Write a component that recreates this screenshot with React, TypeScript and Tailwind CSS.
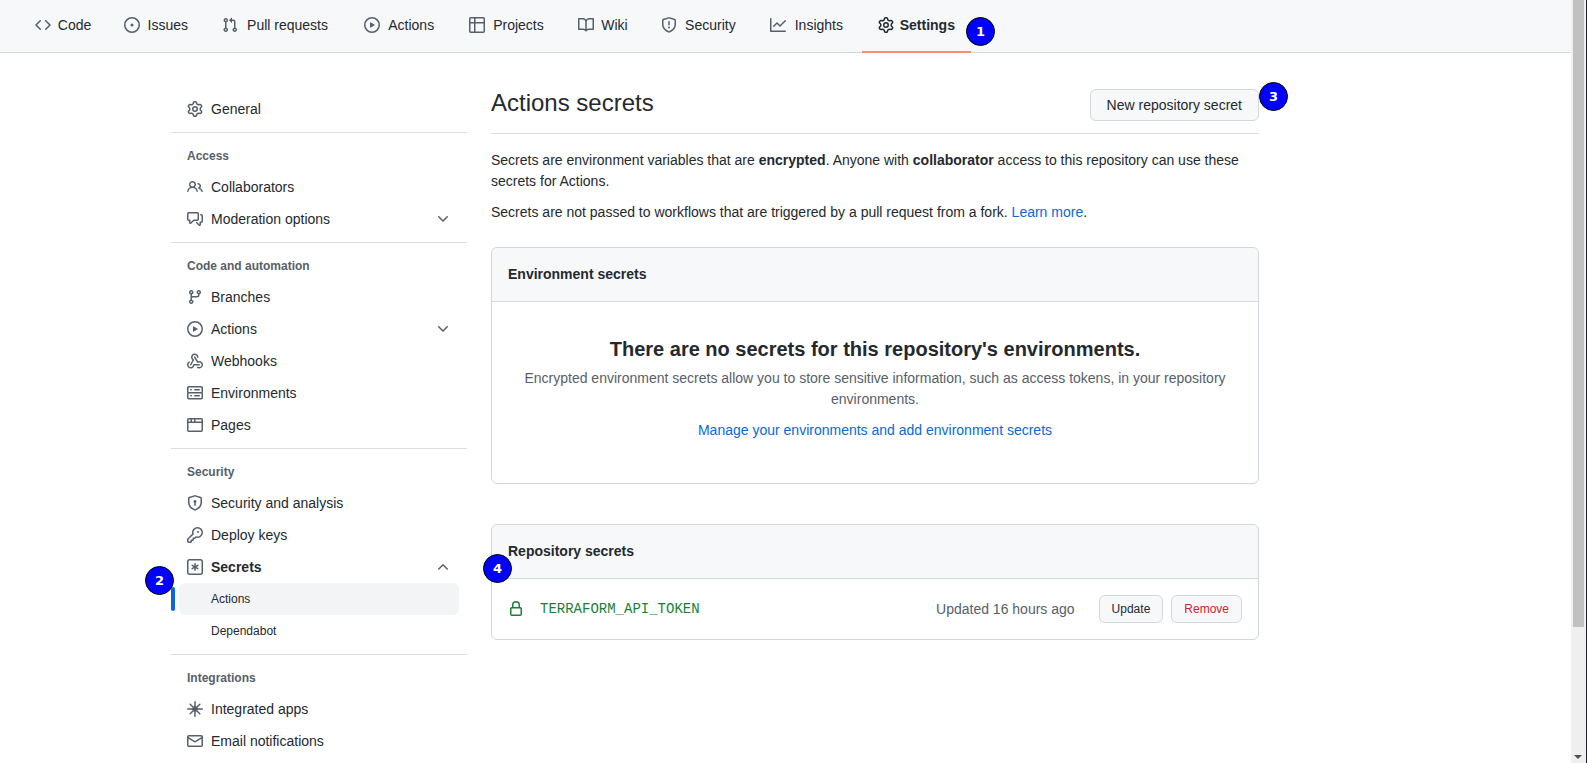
import type { ReactNode } from "react";

/* --- octicons, 16px --- */
const paths = {
  code: "m11.28 3.22 4.25 4.25a.75.75 0 0 1 0 1.06l-4.25 4.25a.749.749 0 0 1-1.275-.326.749.749 0 0 1 .215-.734L13.94 8l-3.72-3.72a.749.749 0 0 1 .326-1.275.749.749 0 0 1 .734.215Zm-6.56 0a.751.751 0 0 1 1.042.018.751.751 0 0 1 .018 1.042L2.06 8l3.72 3.72a.749.749 0 0 1-.326 1.275.749.749 0 0 1-.734-.215L.47 8.53a.75.75 0 0 1 0-1.06Z",
  issue: "M8 9.5a1.5 1.5 0 1 0 0-3 1.5 1.5 0 0 0 0 3Z M8 0a8 8 0 1 1 0 16A8 8 0 0 1 8 0ZM1.5 8a6.5 6.5 0 1 0 13 0 6.5 6.5 0 0 0-13 0Z",
  pull: "M1.5 3.25a2.25 2.25 0 1 1 3 2.122v5.256a2.251 2.251 0 1 1-1.5 0V5.372A2.25 2.25 0 0 1 1.5 3.25Zm5.677-.177L9.573.677A.25.25 0 0 1 10 .854V2.5h1A2.5 2.5 0 0 1 13.5 5v5.628a2.251 2.251 0 1 1-1.5 0V5a1 1 0 0 0-1-1h-1v1.646a.25.25 0 0 1-.427.177L7.177 3.427a.25.25 0 0 1 0-.354ZM3.75 2.5a.75.75 0 1 0 0 1.5.75.75 0 0 0 0-1.5Zm0 9.5a.75.75 0 1 0 0 1.5.75.75 0 0 0 0-1.5Zm8.25.75a.75.75 0 1 0 1.5 0 .75.75 0 0 0-1.5 0Z",
  play: "M8 0a8 8 0 1 1 0 16A8 8 0 0 1 8 0ZM1.5 8a6.5 6.5 0 1 0 13 0 6.5 6.5 0 0 0-13 0Zm4.879-2.773 4.264 2.559a.25.25 0 0 1 0 .428l-4.264 2.559A.25.25 0 0 1 6 10.559V5.442a.25.25 0 0 1 .379-.215Z",
  table: "M0 1.75C0 .784.784 0 1.75 0h12.5C15.216 0 16 .784 16 1.75v12.5A1.75 1.75 0 0 1 14.25 16H1.75A1.75 1.75 0 0 1 0 14.25ZM6.5 6.5v8h7.75a.25.25 0 0 0 .25-.25V6.5Zm8-1.5V1.75a.25.25 0 0 0-.25-.25H6.5V5Zm-13 1.5v7.75c0 .138.112.25.25.25H5v-8ZM5 5V1.5H1.75a.25.25 0 0 0-.25.25V5Z",
  book: "M0 1.75A.75.75 0 0 1 .75 1h4.253c1.227 0 2.317.59 3 1.501A3.743 3.743 0 0 1 11.006 1h4.245a.75.75 0 0 1 .75.75v10.5a.75.75 0 0 1-.75.75h-4.507a2.25 2.25 0 0 0-1.591.659l-.622.621a.75.75 0 0 1-1.06 0l-.622-.621A2.25 2.25 0 0 0 5.258 13H.75a.75.75 0 0 1-.75-.75Zm7.251 10.324.004-5.073-.002-2.253A2.25 2.25 0 0 0 5.003 2.5H1.5v9h3.757a3.75 3.75 0 0 1 1.994.574ZM8.755 4.75l-.004 7.322a3.752 3.752 0 0 1 1.992-.572H14.5v-9h-3.495a2.25 2.25 0 0 0-2.25 2.25Z",
  shield: "M7.467.133a1.748 1.748 0 0 1 1.066 0l5.25 1.68A1.75 1.75 0 0 1 15 3.48V7c0 1.566-.32 3.182-1.303 4.682-.983 1.498-2.585 2.813-5.032 3.855a1.697 1.697 0 0 1-1.33 0c-2.447-1.042-4.049-2.357-5.032-3.855C1.32 10.182 1 8.566 1 7V3.48a1.75 1.75 0 0 1 1.217-1.667Zm.61 1.429a.25.25 0 0 0-.153 0l-5.25 1.68a.25.25 0 0 0-.174.238V7c0 1.358.275 2.666 1.057 3.86.784 1.194 2.121 2.34 4.366 3.297a.196.196 0 0 0 .154 0c2.245-.956 3.582-2.104 4.366-3.298C13.225 9.666 13.5 8.36 13.5 7V3.48a.251.251 0 0 0-.174-.237l-5.25-1.68ZM8.75 4.75v3a.75.75 0 0 1-1.5 0v-3a.75.75 0 0 1 1.5 0ZM9 10.5a1 1 0 1 1-2 0 1 1 0 0 1 2 0Z",
  graph: "M1.5 1.75V13.5h13.75a.75.75 0 0 1 0 1.5H.75a.75.75 0 0 1-.75-.75V1.75a.75.75 0 0 1 1.5 0Zm14.28 2.53-5.25 5.25a.75.75 0 0 1-1.06 0L7 7.06 4.28 9.78a.751.751 0 0 1-1.042-.018.751.751 0 0 1-.018-1.042l3.25-3.25a.75.75 0 0 1 1.06 0L10 7.94l4.72-4.72a.751.751 0 0 1 1.042.018.751.751 0 0 1 .018 1.042Z",
  gear: "M8 0a8.2 8.2 0 0 1 .701.031C9.444.095 9.99.645 10.16 1.29l.288 1.107c.018.066.079.158.212.224.231.114.454.243.668.386.123.082.233.09.299.071l1.103-.303c.644-.176 1.392.021 1.82.63.27.385.506.792.704 1.218.315.675.111 1.422-.364 1.891l-.814.806c-.049.048-.098.147-.088.294.016.257.016.515 0 .772-.01.147.038.246.088.294l.814.806c.475.469.679 1.216.364 1.891a7.977 7.977 0 0 1-.704 1.217c-.428.61-1.176.807-1.82.63l-1.102-.302c-.067-.019-.177-.011-.3.071a5.909 5.909 0 0 1-.668.386c-.133.066-.194.158-.211.224l-.29 1.106c-.168.646-.715 1.196-1.458 1.26a8.006 8.006 0 0 1-1.402 0c-.743-.064-1.289-.614-1.458-1.26l-.289-1.106c-.018-.066-.079-.158-.212-.224a5.738 5.738 0 0 1-.668-.386c-.123-.082-.233-.09-.299-.071l-1.103.303c-.644.176-1.392-.021-1.82-.63a8.12 8.12 0 0 1-.704-1.218c-.315-.675-.111-1.422.363-1.891l.815-.806c.05-.048.098-.147.088-.294a6.214 6.214 0 0 1 0-.772c.01-.147-.038-.246-.088-.294l-.815-.806C.635 6.045.431 5.298.746 4.623a7.92 7.92 0 0 1 .704-1.217c.428-.61 1.176-.807 1.82-.63l1.102.302c.067.019.177.011.3-.071.214-.143.437-.272.668-.386.133-.066.194-.158.211-.224l.29-1.106C6.009.645 6.556.095 7.299.03 7.53.01 7.764 0 8 0Zm-.571 1.525c-.036.003-.108.036-.137.146l-.289 1.105c-.147.561-.549.967-.998 1.189-.173.086-.34.183-.5.29-.417.278-.97.423-1.529.27l-1.103-.303c-.109-.03-.175.016-.195.045-.22.312-.412.644-.573.99-.014.031-.021.11.059.19l.815.806c.411.406.562.957.53 1.456a4.709 4.709 0 0 0 0 .582c.032.499-.119 1.05-.53 1.456l-.815.806c-.081.08-.073.159-.059.19.162.346.353.677.573.989.02.03.085.076.195.046l1.102-.303c.56-.153 1.113-.008 1.53.27.161.107.328.204.501.29.447.222.85.629.997 1.189l.289 1.105c.029.109.101.143.137.146a6.6 6.6 0 0 0 1.142 0c.036-.003.108-.036.137-.146l.289-1.105c.147-.561.549-.967.998-1.189.173-.086.34-.183.5-.29.417-.278.97-.423 1.529-.27l1.103.303c.109.029.175-.016.195-.045.22-.313.411-.644.573-.99.014-.031.021-.11-.059-.19l-.815-.806c-.411-.406-.562-.957-.53-1.456a4.709 4.709 0 0 0 0-.582c-.032-.499.119-1.05.53-1.456l.815-.806c.081-.08.073-.159.059-.19a6.464 6.464 0 0 0-.573-.989c-.02-.03-.085-.076-.195-.046l-1.102.303c-.56.153-1.113.008-1.53-.27a4.44 4.44 0 0 0-.501-.29c-.447-.222-.85-.629-.997-1.189l-.289-1.105c-.029-.11-.101-.143-.137-.146a6.6 6.6 0 0 0-1.142 0ZM11 8a3 3 0 1 1-6 0 3 3 0 0 1 6 0ZM9.5 8a1.5 1.5 0 1 0-3.001.001A1.5 1.5 0 0 0 9.5 8Z",
  people: "M2 5.5a3.5 3.5 0 1 1 5.898 2.549 5.508 5.508 0 0 1 3.034 4.084.75.75 0 1 1-1.482.235 4 4 0 0 0-7.9 0 .75.75 0 0 1-1.482-.236A5.507 5.507 0 0 1 3.102 8.05 3.493 3.493 0 0 1 2 5.5ZM11 4a3.001 3.001 0 0 1 2.22 5.018 5.01 5.01 0 0 1 2.56 3.012.749.749 0 0 1-.885.954.752.752 0 0 1-.549-.514 3.507 3.507 0 0 0-2.522-2.372.75.75 0 0 1-.574-.73v-.352a.75.75 0 0 1 .416-.672A1.5 1.5 0 0 0 11 5.5.75.75 0 0 1 11 4Zm-5.5-.5a2 2 0 1 0-.001 3.999A2 2 0 0 0 5.5 3.5Z",
  comments: "M1.75 1h8.5c.966 0 1.75.784 1.75 1.75v5.5A1.75 1.75 0 0 1 10.25 10H7.061l-2.574 2.573A1.458 1.458 0 0 1 2 11.543V10h-.25A1.75 1.75 0 0 1 0 8.25v-5.5C0 1.784.784 1 1.75 1ZM1.5 2.75v5.5c0 .138.112.25.25.25h1a.75.75 0 0 1 .75.75v2.19l2.72-2.72a.749.749 0 0 1 .53-.22h3.5a.25.25 0 0 0 .25-.25v-5.5a.25.25 0 0 0-.25-.25h-8.5a.25.25 0 0 0-.25.25Zm13 2a.25.25 0 0 0-.25-.25h-.5a.75.75 0 0 1 0-1.5h.5c.966 0 1.75.784 1.75 1.75v5.5A1.75 1.75 0 0 1 14.25 12H14v1.543a1.458 1.458 0 0 1-2.487 1.03L9.22 12.28a.749.749 0 0 1 .326-1.275.749.749 0 0 1 .734.215l2.22 2.22v-2.19a.75.75 0 0 1 .75-.75h1a.25.25 0 0 0 .25-.25Z",
  branch: "M9.5 3.25a2.25 2.25 0 1 1 3 2.122V6A2.5 2.5 0 0 1 10 8.5H6a1 1 0 0 0-1 1v1.128a2.251 2.251 0 1 1-1.5 0V5.372a2.25 2.25 0 1 1 1.5 0v1.836A2.493 2.493 0 0 1 6 7h4a1 1 0 0 0 1-1v-.628A2.25 2.25 0 0 1 9.5 3.25Zm-6 0a.75.75 0 1 0 1.5 0 .75.75 0 0 0-1.5 0Zm8.25-.75a.75.75 0 1 0 0 1.5.75.75 0 0 0 0-1.5ZM4.25 12a.75.75 0 1 0 0 1.5.75.75 0 0 0 0-1.5Z",
  webhook: "M5.5 4.25a2.25 2.25 0 0 1 4.5 0 .75.75 0 0 0 1.5 0 3.75 3.75 0 1 0-6.14 2.889l-2.272 4.258a.75.75 0 0 0 1.324.706L7 7.25a.75.75 0 0 0-.309-1.015A2.25 2.25 0 0 1 5.5 4.25Z M7.364 3.607a.75.75 0 0 1 1.03.257l2.608 4.349a3.75 3.75 0 1 1-.628 6.785.75.75 0 0 1 .752-1.299 2.25 2.25 0 1 0-.033-3.88.75.75 0 0 1-1.03-.256L7.107 4.636a.75.75 0 0 1 .257-1.03Z M2.9 8.776A.75.75 0 0 1 2.625 9.8 2.25 2.25 0 1 0 6 11.75a.75.75 0 0 1 .75-.751h5.5a.75.75 0 0 1 0 1.5H7.425a3.751 3.751 0 1 1-5.55-3.998.75.75 0 0 1 1.024.274Z",
  server: "M1.75 1h12.5c.966 0 1.75.784 1.75 1.75v4c0 .372-.116.717-.314 1 .198.283.314.628.314 1v4a1.75 1.75 0 0 1-1.75 1.75H1.75A1.75 1.75 0 0 1 0 12.75v-4c0-.358.109-.707.314-1a1.739 1.739 0 0 1-.314-1v-4C0 1.784.784 1 1.75 1ZM1.5 2.75v4c0 .138.112.25.25.25h12.5a.25.25 0 0 0 .25-.25v-4a.25.25 0 0 0-.25-.25H1.75a.25.25 0 0 0-.25.25Zm.25 5.75a.25.25 0 0 0-.25.25v4c0 .138.112.25.25.25h12.5a.25.25 0 0 0 .25-.25v-4a.25.25 0 0 0-.25-.25ZM7 4.75A.75.75 0 0 1 7.75 4h4.5a.75.75 0 0 1 0 1.5h-4.5A.75.75 0 0 1 7 4.75ZM7.75 10h4.5a.75.75 0 0 1 0 1.5h-4.5a.75.75 0 0 1 0-1.5ZM3 4.75A.75.75 0 0 1 3.75 4h.5a.75.75 0 0 1 0 1.5h-.5A.75.75 0 0 1 3 4.75ZM3.75 10h.5a.75.75 0 0 1 0 1.5h-.5a.75.75 0 0 1 0-1.5Z",
  browser: "M0 2.75C0 1.784.784 1 1.75 1h12.5c.966 0 1.75.784 1.75 1.75v10.5A1.75 1.75 0 0 1 14.25 15H1.75A1.75 1.75 0 0 1 0 13.25ZM14.5 6h-13v7.25c0 .138.112.25.25.25h12.5a.25.25 0 0 0 .25-.25Zm-6-3.5v2h6V2.75a.25.25 0 0 0-.25-.25ZM5 2.5v2h2v-2Zm-3.25 0a.25.25 0 0 0-.25.25V4.5h2v-2Z",
  shieldLock: "m8.533.133 5.25 1.68A1.75 1.75 0 0 1 15 3.48V7c0 1.566-.32 3.182-1.303 4.682-.983 1.498-2.585 2.813-5.032 3.855a1.697 1.697 0 0 1-1.33 0c-2.447-1.042-4.049-2.357-5.032-3.855C1.32 10.182 1 8.566 1 7V3.48a1.75 1.75 0 0 1 1.217-1.667l5.25-1.68a1.748 1.748 0 0 1 1.066 0Zm-.61 1.429.001.001-5.25 1.68a.251.251 0 0 0-.174.237V7c0 1.36.275 2.666 1.057 3.859.784 1.194 2.121 2.342 4.366 3.298a.196.196 0 0 0 .154 0c2.245-.957 3.582-2.103 4.366-3.297C13.225 9.666 13.5 8.358 13.5 7V3.48a.25.25 0 0 0-.174-.238l-5.25-1.68a.25.25 0 0 0-.153 0ZM9.5 6.5c0 .536-.286 1.032-.75 1.3v2.45a.75.75 0 0 1-1.5 0V7.8A1.5 1.5 0 1 1 9.5 6.5Z",
  key: "M10.5 0a5.499 5.499 0 1 1-1.288 10.848l-.932.932a.749.749 0 0 1-.53.22H7v.75a.749.749 0 0 1-.22.53l-.5.5a.749.749 0 0 1-.53.22H5v.75a.749.749 0 0 1-.22.53l-.5.5a.749.749 0 0 1-.53.22h-2A1.75 1.75 0 0 1 0 14.25v-2c0-.199.079-.389.22-.53l4.932-4.932A5.5 5.5 0 0 1 10.5 0Zm-4 5.5c-.001.431.069.86.205 1.269a.75.75 0 0 1-.181.768L1.5 12.56v1.69c0 .138.112.25.25.25h1.69l.06-.06v-1.19a.75.75 0 0 1 .75-.75h1.19l.06-.06v-1.19a.75.75 0 0 1 .75-.75h1.19l1.023-1.025a.75.75 0 0 1 .768-.18A4 4 0 1 0 6.5 5.5ZM11 6a1 1 0 1 1 0-2 1 1 0 0 1 0 2Z",
  keyAsterisk: "M0 2.75A2.75 2.75 0 0 1 2.75 0h10.5A2.75 2.75 0 0 1 16 2.75v10.5A2.75 2.75 0 0 1 13.25 16H2.75A2.75 2.75 0 0 1 0 13.25ZM2.75 1.5c-.69 0-1.25.56-1.25 1.25v10.5c0 .69.56 1.25 1.25 1.25h10.5c.69 0 1.25-.56 1.25-1.25V2.75c0-.69-.56-1.25-1.25-1.25Z M8 4a.75.75 0 0 1 .75.75V6.7l1.69-.975a.75.75 0 0 1 .75 1.3L9.5 8l1.69.975a.75.75 0 0 1-.75 1.3L8.75 9.3v1.95a.75.75 0 0 1-1.5 0V9.3l-1.69.975a.75.75 0 0 1-.75-1.3L6.5 8l-1.69-.975a.75.75 0 0 1 .75-1.3L7.25 6.7V4.75A.75.75 0 0 1 8 4Z",
  mail: "M1.75 2h12.5c.966 0 1.75.784 1.75 1.75v8.5A1.75 1.75 0 0 1 14.25 14H1.75A1.75 1.75 0 0 1 0 12.25v-8.5C0 2.784.784 2 1.75 2ZM1.5 12.251c0 .138.112.25.25.25h12.5a.25.25 0 0 0 .25-.25V5.809L8.38 9.397a.75.75 0 0 1-.76 0L1.5 5.809v6.442Zm13-8.181v-.32a.25.25 0 0 0-.25-.25H1.75a.25.25 0 0 0-.25.25v.32L8 7.88Z",
  lock: "M4 4a4 4 0 0 1 8 0v2h.25c.966 0 1.75.784 1.75 1.75v5.5A1.75 1.75 0 0 1 12.25 15h-8.5A1.75 1.75 0 0 1 2 13.25v-5.5C2 6.784 2.784 6 3.75 6H4Zm8.25 3.5h-8.5a.25.25 0 0 0-.25.25v5.5c0 .138.112.25.25.25h8.5a.25.25 0 0 0 .25-.25v-5.5a.25.25 0 0 0-.25-.25ZM10.5 6V4a2.5 2.5 0 1 0-5 0v2Z",
  chevronDown: "M12.78 5.22a.749.749 0 0 1 0 1.06l-4.25 4.25a.749.749 0 0 1-1.06 0L3.22 6.28a.749.749 0 1 1 1.06-1.06L8 8.939l3.72-3.719a.749.749 0 0 1 1.06 0Z",
  chevronUp: "M3.22 10.53a.749.749 0 0 1 0-1.06l4.25-4.25a.749.749 0 0 1 1.06 0l4.25 4.25a.749.749 0 1 1-1.06 1.06L8 6.811 4.28 10.53a.749.749 0 0 1-1.06 0Z",
};

type IconName = keyof typeof paths | "apps";

function Octicon({ name, className = "text-[#57606a]" }: { name: IconName; className?: string }) {
  if (name === "apps") {
    return (
      <svg viewBox="0 0 16 16" fill="none" stroke="currentColor" strokeLinecap="round" className={`size-4 shrink-0 ${className}`}>
        <path strokeWidth="1.5" d="M8 .75v14.5M.75 8h14.5M3.2 3.2l9.6 9.6M12.8 3.2l-9.6 9.6" />
        <path fill="currentColor" stroke="none" d="M8 4.5 11.5 8 8 11.5 4.5 8Z" />
      </svg>
    );
  }
  return (
    <svg viewBox="0 0 16 16" fill="currentColor" className={`size-4 shrink-0 ${className}`}>
      <path d={paths[name]} />
    </svg>
  );
}

/* --- top tabs --- */
const tabs: { label: string; icon: IconName; active?: boolean }[] = [
  { label: "Code", icon: "code" },
  { label: "Issues", icon: "issue" },
  { label: "Pull requests", icon: "pull" },
  { label: "Actions", icon: "play" },
  { label: "Projects", icon: "table" },
  { label: "Wiki", icon: "book" },
  { label: "Security", icon: "shield" },
  { label: "Insights", icon: "graph" },
  { label: "Settings", icon: "gear", active: true },
];

function Badge({ n, className }: { n: number; className: string }) {
  return (
    <div
      className={`absolute z-10 flex h-[29px] w-[29px] items-center justify-center rounded-full border border-black bg-[#0000ff] font-['DejaVu_Sans',sans-serif] text-[13px] font-bold text-white ${className}`}
    >
      {n}
    </div>
  );
}

function Tabs() {
  return (
    <nav className="relative flex h-[53px] items-stretch border-b border-[#d0d7de] bg-[#f6f8fa] pl-[19px]">
      {tabs.map(({ label, icon, active }) => (
        <div
          key={label}
          className={`relative flex items-center gap-[6px] px-4 pb-[3px] text-sm ${active ? "font-bold" : ""}`}
        >
          <Octicon name={icon} className={active ? "text-[#24292f]" : "text-[#57606a]"} />
          {/* the bold label reserves the width, so tabs don't shift when selected */}
          <span
            data-content={label}
            className="text-center before:invisible before:block before:h-0 before:overflow-hidden before:font-bold before:content-[attr(data-content)]"
          >
            {label}
          </span>
          {active && <span className="absolute inset-x-0 bottom-[-1px] h-[2px] bg-[#fd8c73]" />}
        </div>
      ))}
    </nav>
  );
}

function NavItem({
  icon,
  label,
  chevron,
  bold,
}: {
  icon: IconName;
  label: string;
  chevron?: "chevronDown" | "chevronUp";
  bold?: boolean;
}) {
  return (
    <div className={`mx-2 flex h-8 items-center gap-2 px-2 text-sm ${bold ? "font-bold" : ""}`}>
      <Octicon name={icon} />
      <span className="flex-1">{label}</span>
      {chevron && <Octicon name={chevron} />}
    </div>
  );
}

function NavSection({ title, children }: { title: string; children: ReactNode }) {
  return (
    <div>
      <div className="mt-[7px] border-t border-[#d8dee4] pb-[6px] pt-[14px] pl-4 text-xs leading-[18px] font-bold text-[#57606a]">
        {title}
      </div>
      {children}
    </div>
  );
}

function Sidebar() {
  return (
    <aside className="w-[296px] shrink-0 pt-10">
      <NavItem icon="gear" label="General" />
      <NavSection title="Access">
        <NavItem icon="people" label="Collaborators" />
        <NavItem icon="comments" label="Moderation options" chevron="chevronDown" />
      </NavSection>
      <NavSection title="Code and automation">
        <NavItem icon="branch" label="Branches" />
        <NavItem icon="play" label="Actions" chevron="chevronDown" />
        <NavItem icon="webhook" label="Webhooks" />
        <NavItem icon="server" label="Environments" />
        <NavItem icon="browser" label="Pages" />
      </NavSection>
      <NavSection title="Security">
        <NavItem icon="shieldLock" label="Security and analysis" />
        <NavItem icon="key" label="Deploy keys" />
        <NavItem icon="keyAsterisk" label="Secrets" chevron="chevronUp" bold />
        <div className="relative mx-2 flex h-8 items-center rounded-md bg-[#f3f4f6] pl-8 text-xs">
          Actions
          <span className="absolute left-[-8px] top-1 h-6 w-1 rounded-md bg-[#0969da]" />
        </div>
        <div className="mx-2 flex h-8 items-center pl-8 text-xs">Dependabot</div>
      </NavSection>
      <NavSection title="Integrations">
        <NavItem icon="apps" label="Integrated apps" />
        <NavItem icon="mail" label="Email notifications" />
      </NavSection>
    </aside>
  );
}

function Main() {
  return (
    <main className="ml-6 w-[768px] shrink-0 pt-9">
      <div className="flex items-center justify-between border-b border-[#d8dee4] pb-3">
        <h1 className="pb-1 text-2xl leading-[28px]">Actions secrets</h1>
        <button className="h-8 rounded-md border border-[#d5d8da] bg-[#f6f8fa] px-4 text-sm">
          New repository secret
        </button>
      </div>

      <p className="mt-4 text-sm leading-[21px]">
        Secrets are environment variables that are <b>encrypted</b>. Anyone with <b>collaborator</b> access to
        this repository can use these secrets for Actions.
      </p>
      <p className="mt-[10px] text-sm leading-[21px]">
        Secrets are not passed to workflows that are triggered by a pull request from a fork.{" "}
        <span className="text-[#0969da]">Learn more</span>.
      </p>

      {/* environment secrets */}
      <section className="mt-6 rounded-md border border-[#d0d7de]">
        <div className="rounded-t-md border-b border-[#d0d7de] bg-[#f6f8fa] p-4 text-sm leading-[21px] font-bold">
          Environment secrets
        </div>
        <div className="px-8 pb-[42px] pt-[32px] text-center text-sm leading-[21px]">
          <h3 className="text-[20px] leading-[30px] font-bold">There are no secrets for this repository's environments.</h3>
          <p className="mt-1 text-[#57606a]">
            Encrypted environment secrets allow you to store sensitive information, such as access tokens, in your
            repository environments.
          </p>
          <p className="mt-[10px] text-[#0969da]">Manage your environments and add environment secrets</p>
        </div>
      </section>

      {/* repository secrets */}
      <section className="mt-10 rounded-md border border-[#d0d7de]">
        <div className="rounded-t-md border-b border-[#d0d7de] bg-[#f6f8fa] p-4 text-sm leading-[21px] font-bold">
          Repository secrets
        </div>
        <div className="flex items-center p-4">
          <Octicon name="lock" className="text-[#1a7f37]" />
          <span className="ml-4 flex-1 font-['Liberation_Mono',monospace] text-sm text-[#1a7f37]">
            TERRAFORM_API_TOKEN
          </span>
          <span className="text-sm text-[#57606a]">Updated 16 hours ago</span>
          <button className="ml-6 h-7 rounded-md border border-[#d5d8da] bg-[#f6f8fa] px-3 text-xs">Update</button>
          <button className="ml-2 h-7 rounded-md border border-[#d5d8da] bg-[#f6f8fa] px-3 text-xs text-[#cf222e]">
            Remove
          </button>
        </div>
      </section>
    </main>
  );
}

function ScrollRail() {
  return (
    <div className="relative w-4 shrink-0 border-r border-[#1e1e2a] bg-[#efefef] px-[2px]">
      <div className="h-[627px] bg-[#c1c1c1]" />
      <div className="absolute bottom-[4px] left-[3px] h-0 w-0 border-x-[4px] border-t-[4px] border-x-transparent border-t-[#505050]" />
    </div>
  );
}

export default function App() {
  return (
    <div className="relative flex h-[763px] overflow-hidden bg-white font-['Liberation_Sans',sans-serif] text-[#24292f]">
      <div className="min-w-0 flex-1">
        <Tabs />
        <div className="flex pl-[171px]">
          <Sidebar />
          <Main />
        </div>
      </div>
      <ScrollRail />
      <Badge n={1} className="left-[966px] top-[17px]" />
      <Badge n={2} className="left-[145px] top-[566px]" />
      <Badge n={3} className="left-[1259px] top-[82px]" />
      <Badge n={4} className="left-[483px] top-[554px]" />
    </div>
  );
}
